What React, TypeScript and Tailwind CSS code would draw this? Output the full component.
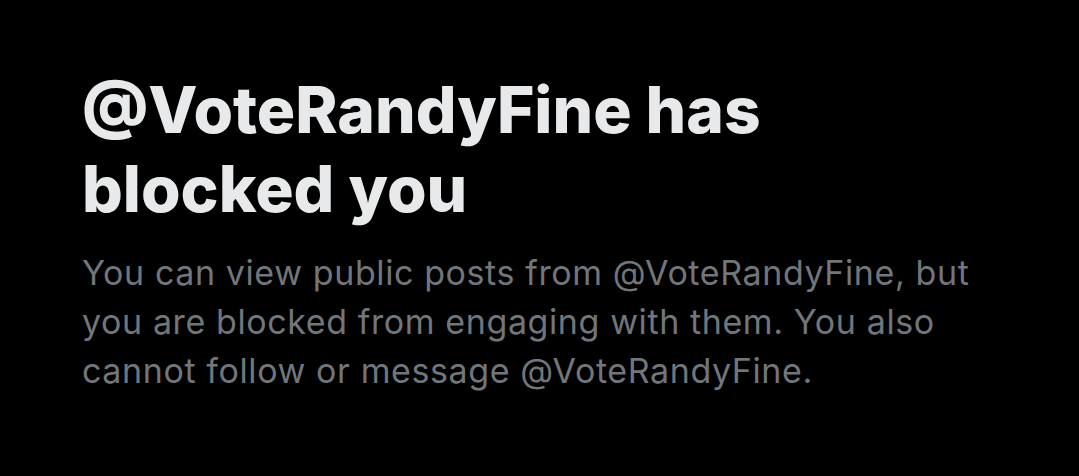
export default function App() {
  return (
    <div className="w-[1079px] h-[476px] bg-black overflow-hidden">
      <div className="pl-[82px] pt-[70px] pr-[40px]" style={{ fontFamily: "Inter, 'Noto Sans', sans-serif" }}>
        <h1 className="text-[64px] leading-[79px] font-extrabold text-[#e7e9ea]">
          @VoteRandyFine has
          <br />
          blocked you
        </h1>
        <p className="mt-[20px] text-[34px] leading-[49px] tracking-[0.6px] text-[#71767b]">
          You can view public posts from @VoteRandyFine, but
          <br />
          you are blocked from engaging with them. You also
          <br />
          cannot follow or message @VoteRandyFine.
        </p>
      </div>
    </div>
  );
}
